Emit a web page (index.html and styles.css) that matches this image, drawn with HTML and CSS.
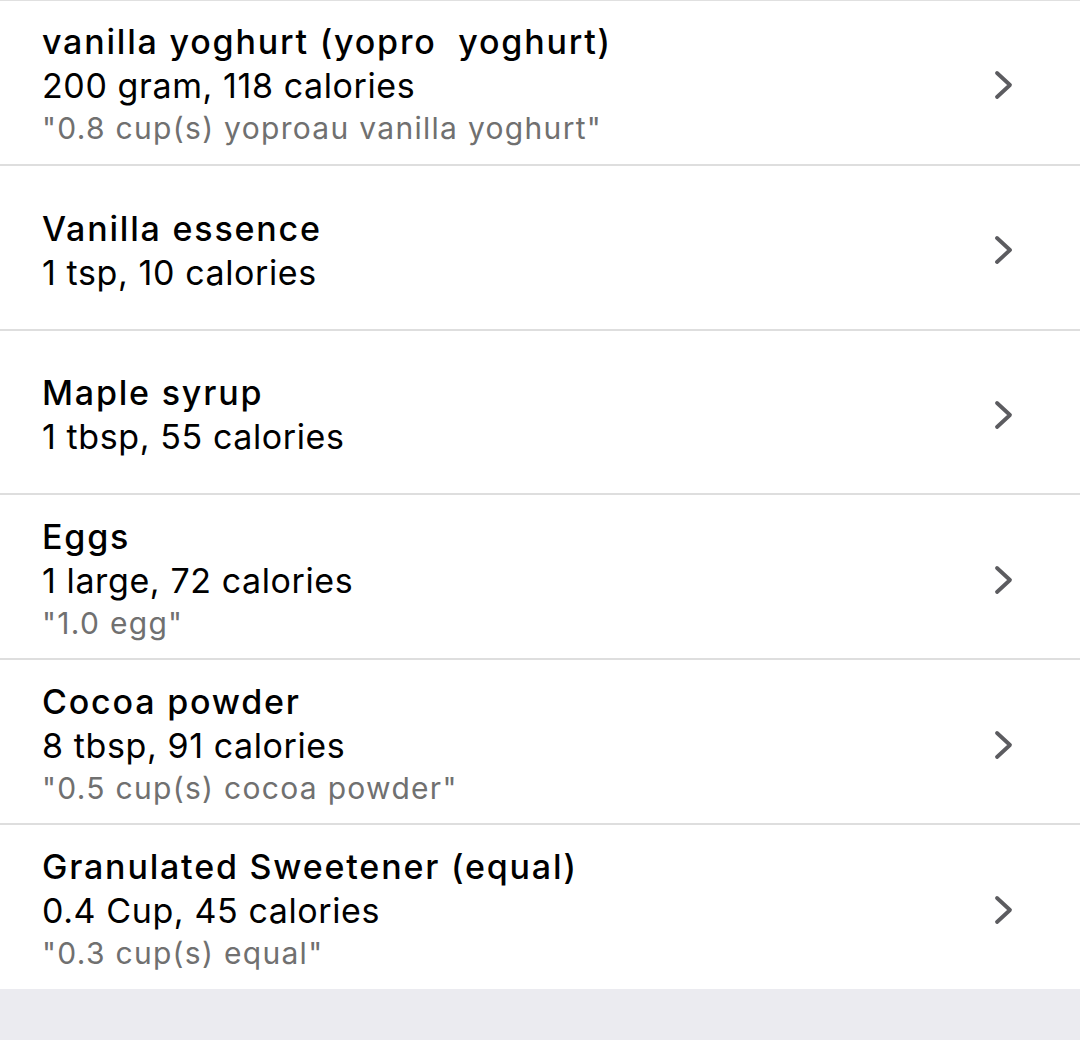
FILE: index.html
```html
<!DOCTYPE html>
<html lang="en">
<head>
  <meta charset="UTF-8" />
  <meta name="viewport" content="width=device-width, initial-scale=1.0"/>
  <title>Recipe Ingredients</title>
  <link rel="stylesheet" href="styles.css">
</head>
<body>
  <ul class="ingredients">
    <li class="item">
      <div class="info">
        <div class="name">vanilla yoghurt (yopro&nbsp; yoghurt)</div>
        <div class="amount">200 gram, 118 calories</div>
        <div class="note">"0.8 cup(s) yoproau vanilla yoghurt"</div>
      </div>
      <svg class="chevron" viewBox="0 0 20 30"><path d="M3 3 L16 15 L3 27" /></svg>
    </li>
    <li class="item">
      <div class="info">
        <div class="name">Vanilla essence</div>
        <div class="amount">1 tsp, 10 calories</div>
      </div>
      <svg class="chevron" viewBox="0 0 20 30"><path d="M3 3 L16 15 L3 27" /></svg>
    </li>
    <li class="item">
      <div class="info">
        <div class="name">Maple syrup</div>
        <div class="amount">1 tbsp, 55 calories</div>
      </div>
      <svg class="chevron" viewBox="0 0 20 30"><path d="M3 3 L16 15 L3 27" /></svg>
    </li>
    <li class="item">
      <div class="info">
        <div class="name">Eggs</div>
        <div class="amount">1 large, 72 calories</div>
        <div class="note">"1.0 egg"</div>
      </div>
      <svg class="chevron" viewBox="0 0 20 30"><path d="M3 3 L16 15 L3 27" /></svg>
    </li>
    <li class="item">
      <div class="info">
        <div class="name">Cocoa powder</div>
        <div class="amount">8 tbsp, 91 calories</div>
        <div class="note">"0.5 cup(s) cocoa powder"</div>
      </div>
      <svg class="chevron" viewBox="0 0 20 30"><path d="M3 3 L16 15 L3 27" /></svg>
    </li>
    <li class="item">
      <div class="info">
        <div class="name">Granulated Sweetener (equal)</div>
        <div class="amount">0.4 Cup, 45 calories</div>
        <div class="note">"0.3 cup(s) equal"</div>
      </div>
      <svg class="chevron" viewBox="0 0 20 30"><path d="M3 3 L16 15 L3 27" /></svg>
    </li>
  </ul>
</body>
</html>
```

FILE: styles.css
```css
body {
  margin: 0;
  background: #ebebf0;
  font-family: Inter, "Noto Sans", sans-serif;
}

.ingredients {
  list-style: none;
  margin: 0;
  padding: 0;
  background: white;
  border-top: 1px solid #e0e0e0;
}

.item {
  display: flex;
  align-items: center;
  justify-content: space-between;
  box-sizing: border-box;
  height: 164.8px;
  padding: 6px 66px 0 42px;
  border-bottom: 2px solid #dedede;
}

.item:last-child {
  border-bottom: none;
  height: 164px;
}

.info {
  display: flex;
  flex-direction: column;
}

.name {
  font-size: 34px;
  font-weight: 500;
  color: #000;
  line-height: 44px;
  letter-spacing: 1.8px;
}

.amount {
  font-size: 34px;
  color: #000;
  line-height: 43px;
  letter-spacing: 0.6px;
}

.note {
  font-size: 30px;
  color: #707070;
  line-height: 43px;
  letter-spacing: 1.3px;
}

.chevron {
  width: 20px;
  height: 30px;
  fill: none;
  stroke: #5c5c60;
  stroke-width: 3.8;
  stroke-linecap: round;
  stroke-linejoin: round;
}
```
